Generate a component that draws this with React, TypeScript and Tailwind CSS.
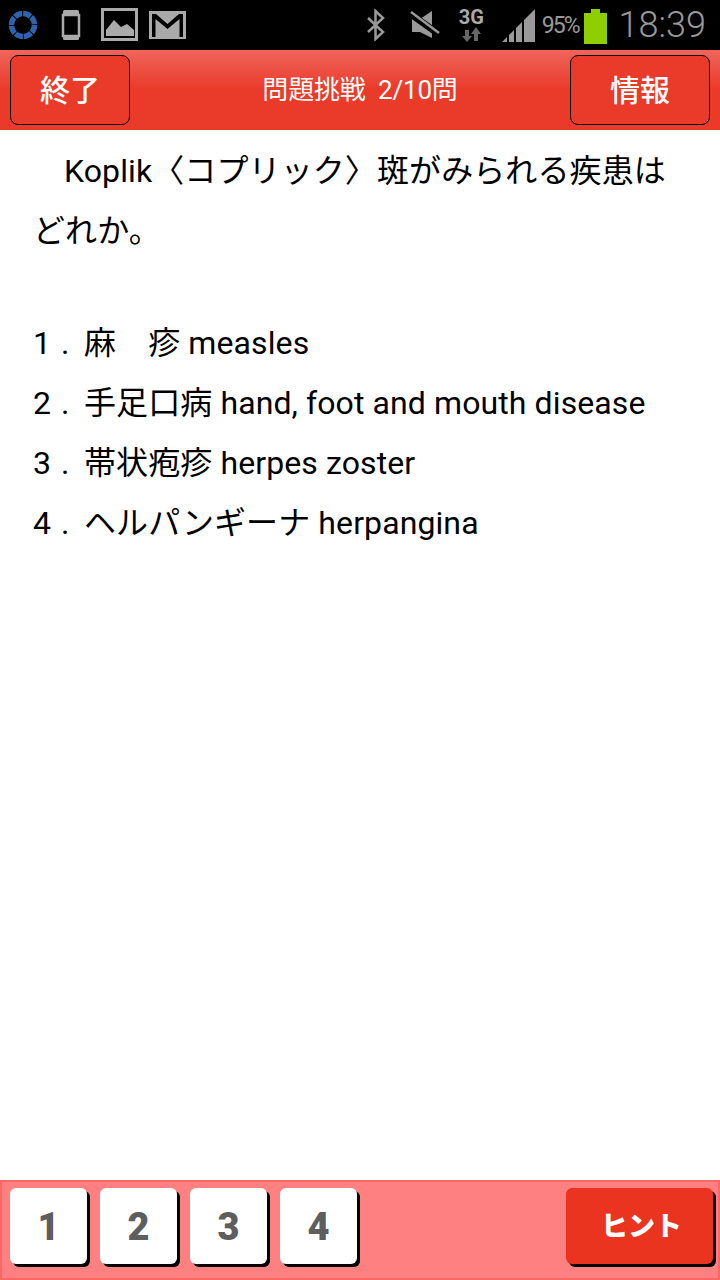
export default function App() {
  const font = { fontFamily: 'Roboto, "Noto Sans CJK JP", sans-serif' };
  const items = [
    ['1', '麻　疹 measles'],
    ['2', '手足口病 hand, foot and mouth disease'],
    ['3', '帯状疱疹 herpes zoster'],
    ['4', 'ヘルパンギーナ herpangina'],
  ];
  return (
    <div className="w-[720px] h-[1280px] flex flex-col bg-white overflow-hidden" style={font}>
      <div className="h-[50px] bg-black flex items-center shrink-0 pl-[8px] pr-[14px]">
        <svg width="30" height="30" viewBox="0 0 30 30" className="mr-[22px]"><circle cx="15" cy="15" r="11.500" fill="none" stroke="#2f62ad" strokeWidth="5.500" strokeDasharray="8 1" /></svg>
        <svg width="22" height="32" viewBox="0 0 22 32" className="mr-[19px]" fill="none"><rect x="3" y="6" width="16" height="21" stroke="#aaa" strokeWidth="2.500" /><rect x="3" y="1" width="16" height="5" rx="1.500" fill="#aaa" /><rect x="3" y="27" width="16" height="4" rx="1.500" fill="#aaa" /></svg>
        <svg width="38" height="34" viewBox="0 0 38 34" className="mr-[10px]" fill="none"><rect x="1.500" y="1.500" width="34" height="30" stroke="#aaa" strokeWidth="3" /><path d="M5 28V22L13 12L20 19L26 16L33 22V28Z" fill="#aaa" /></svg>
        <svg width="37" height="28" viewBox="0 0 37 28"><rect x="0" y="0" width="37" height="28" fill="#aaa" /><path d="M3 26V3H7L18.500 13L30 3H34V26H30.500V8L18.500 18L6.500 8V26Z" fill="#000" /></svg>
        <div className="flex-1" />
        <svg width="22" height="32" viewBox="0 0 22 32" fill="none" className="mr-[23px]"><path d="M3 9L18 23L10.500 30V2L18 9L3 23" stroke="#999" strokeWidth="2.500" /></svg>
        <svg width="32" height="30" viewBox="0 0 32 30" className="mr-[16px]"><path d="M2 9H10L22 1V28L10 22H2Z" fill="#999" /><path d="M2 5L30 25" stroke="#000" strokeWidth="7" /><path d="M1 2L29 23" stroke="#999" strokeWidth="2.500" /></svg>
        <div className="w-[27px] flex flex-col items-center mr-[17px]">
          <span className="text-[20px] leading-[19px] font-bold text-[#aaa]">3G</span>
          <svg width="22" height="15" viewBox="0 0 22 15"><path d="M5 3H9V9H12L7 15L2 9H5Z" fill="#666" /><path d="M14 14H18V7H21L16 0L11 7H14Z" fill="#666" /></svg>
        </div>
        <svg width="34" height="34" viewBox="0 0 34 34" className="mr-[6px] mt-[2px]"><path d="M0 33L5 28V33Z M7 26L12 21V33H7Z M14 19L20 13V33H14Z M22 11L33 0V33H22Z" fill="#999" /></svg>
        <span className="text-[23px] tracking-[-2px] text-[#999] mr-[5px] mt-[3px]">95%</span>
        <div className="flex flex-col items-center mt-[2px] mr-[12px]">
          <div className="w-[9px] h-[4px] bg-[#8fce00]" />
          <div className="w-[23px] h-[31px] bg-[#8fce00]" />
        </div>
        <span className="text-[36px] font-light text-[#999]">18:39</span>
      </div>
      <div className="h-[80px] shrink-0 flex items-center px-[10px] bg-[linear-gradient(#f0655c_0%,#ea3a29_50%,#ea3a29_100%)]">
        <div className="w-[120px] h-[70px] rounded-[8px] border border-black bg-[#ea3a29] flex items-center justify-center text-white text-[30px] font-medium">終了</div>
        <div className="flex-1 text-center pl-[20px] text-white text-[26px] tracking-[-0.200px] whitespace-pre">問題挑戦  2/10問</div>
        <div className="w-[140px] h-[70px] rounded-[8px] border border-black bg-[#ea3a29] flex items-center justify-center text-white text-[30px] font-medium">情報</div>
      </div>
      <div className="flex-1 pl-[33px] pr-[30px] pt-[11px] text-black text-[32px] tracking-[0.100px]">
        <p className="leading-[60px] indent-[31px]">Koplik〈コプリック〉斑がみられる疾患はどれか。</p>
        <div className="mt-[52px]">
          {items.map(([n, t]) => (
            <div key={n} className="leading-[60px] whitespace-nowrap flex">
              <span className="w-[28px]">{n}</span>
              <span className="w-[23px]">.</span>
              <span>{t}</span>
            </div>
          ))}
        </div>
      </div>
      <div className="h-[100px] shrink-0 bg-[#ff8080] border-2 border-[#ff6666] flex items-start pt-[6px] pl-[8px] pr-[5px]">
        {['1', '2', '3', '4'].map((n) => (
          <div key={n} className="w-[77px] h-[76px] mr-[13px] pt-[3px] rounded-[6px] bg-white shadow-[3px_3px_0_#000] flex items-center justify-center text-[#5e5e5e] text-[38px] font-black">{n}</div>
        ))}
        <div className="flex-1" />
        <div className="w-[147px] h-[76px] rounded-[6px] bg-[#ea3420] shadow-[3px_3px_0_#000] flex items-center justify-center text-white text-[27px] font-black pl-[4px] pt-[3px]">ヒント</div>
      </div>
    </div>
  );
}
